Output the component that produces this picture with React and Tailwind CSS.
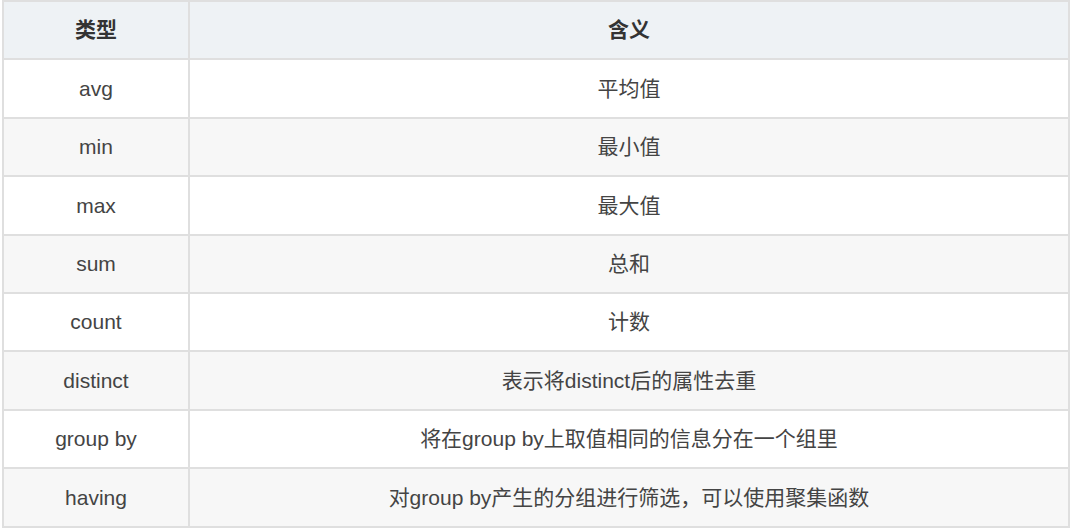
const ROWS = [
  { type: "avg", desc: "平均值" },
  { type: "min", desc: "最小值" },
  { type: "max", desc: "最大值" },
  { type: "sum", desc: "总和" },
  { type: "count", desc: "计数" },
  { type: "distinct", desc: "表示将distinct后的属性去重" },
  { type: "group by", desc: "将在group by上取值相同的信息分在一个组里" },
  { type: "having", desc: "对group by产生的分组进行筛选，可以使用聚集函数" },
];

export default function App() {
  return (
    <div
      className="w-[1072px] h-[528px] bg-white pl-[2px] text-[21px] text-[#444]"
      style={{ fontFamily: '"Liberation Sans", "Noto Sans CJK SC", sans-serif' }}
    >
      <table className="w-[1068px] border-collapse table-fixed">
        <thead>
          <tr className="h-[58.4px] bg-[#eef2f5]">
            <th className="w-[186px] border-2 border-[#dfdfdf] text-center font-bold text-[#333]">
              类型
            </th>
            <th className="border-2 border-[#dfdfdf] text-center font-bold text-[#333]">
              含义
            </th>
          </tr>
        </thead>
        <tbody>
          {ROWS.map((row, i) => (
            <tr
              key={row.type}
              className={`h-[58.4px] ${i % 2 === 1 ? "bg-[#f7f7f7]" : "bg-white"}`}
            >
              <td className="border-2 border-[#dfdfdf] text-center">{row.type}</td>
              <td className="border-2 border-[#dfdfdf] text-center">{row.desc}</td>
            </tr>
          ))}
        </tbody>
      </table>
    </div>
  );
}
